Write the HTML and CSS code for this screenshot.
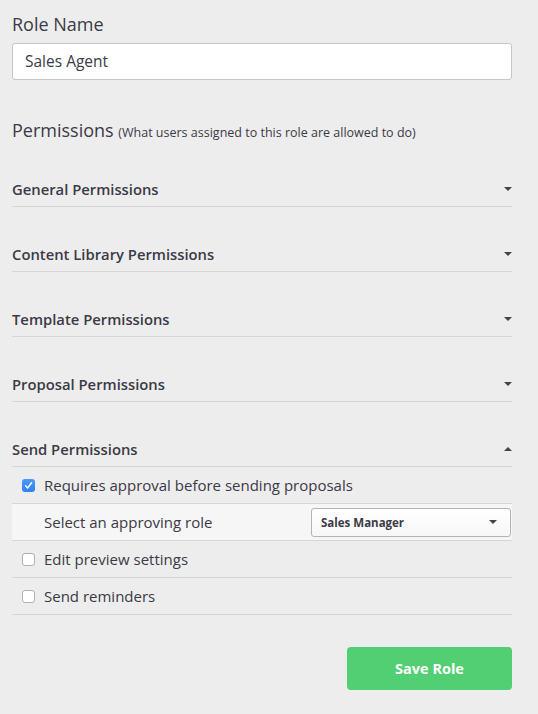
FILE: index.html
```html
<!DOCTYPE html>
<html>
<head>
<meta charset="utf-8">
<link rel="stylesheet" href="styles.css">
</head>
<body>
<div class="page">
  <div class="label">Role Name</div>
  <div class="input">Sales Agent</div>

  <div class="perm-title">Permissions <span class="sub">(What users assigned to this role are allowed to do)</span></div>

  <div class="section"><span>General Permissions</span><i class="caret down"></i></div>
  <div class="section"><span>Content Library Permissions</span><i class="caret down"></i></div>
  <div class="section"><span>Template Permissions</span><i class="caret down"></i></div>
  <div class="section"><span>Proposal Permissions</span><i class="caret down"></i></div>
  <div class="section"><span>Send Permissions</span><i class="caret up"></i></div>

  <div class="row"><span class="cb checked"><svg viewBox="0 0 13 13" width="13" height="13"><path d="M3.6 6.8 L5.6 9 L9.6 3.8" fill="none" stroke="#fff" stroke-width="1.4" stroke-linecap="round" stroke-linejoin="round"/></svg></span><span>Requires approval before sending proposals</span></div>
  <div class="row sub-row"><span class="sub-label">Select an approving role</span><div class="select"><span>Sales Manager</span><i class="caret down small"></i></div></div>
  <div class="row"><span class="cb"></span><span>Edit preview settings</span></div>
  <div class="row"><span class="cb"></span><span>Send reminders</span></div>

  <div class="actions"><button class="save">Save Role</button></div>
</div>
</body>
</html>
```
FILE: styles.css
```css
html, body { margin: 0; padding: 0; background: #ededed; }
body { font-family: "Open Sans", Lato, sans-serif; color: #3b3a46; }
.page { width: 500px; padding: 12px 0 0 12px; }
.label { font-size: 18px; line-height: 24px; height: 24px; margin-bottom: 7px; }
.input { box-sizing: border-box; height: 37px; background: #fff; border: 1px solid #c6c6c6; border-radius: 3px; padding: 0 12px; font-size: 15.5px; line-height: 35px; }
.perm-title { margin-top: 38px; font-size: 18px; line-height: 24px; height: 24px; }
.perm-title .sub { font-size: 12.5px; }
.section { margin-top: 30px; height: 35px; box-sizing: border-box; border-bottom: 1px solid #d6d6d6; display: flex; align-items: center; justify-content: space-between; font-weight: 600; font-size: 14.8px; }
.caret { display: block; width: 0; height: 0; border-left: 4.5px solid transparent; border-right: 4.5px solid transparent; }
.caret.down { border-top: 4px solid #444; }
.caret.up { border-bottom: 4px solid #444; }
.caret.small { border-left-width: 4px; border-right-width: 4px; border-top-width: 4px; }
.row { height: 37px; box-sizing: border-box; border-bottom: 1px solid #d6d6d6; display: flex; align-items: center; padding-left: 10px; font-size: 15px; }
.sub-row { background: #f6f6f6; padding-left: 32px; justify-content: space-between; padding-right: 1px; }
.cb { box-sizing: border-box; width: 13px; height: 13px; border-radius: 3px; border: 1px solid #b0b0b0; background: #fff; margin-right: 9px; display: flex; }
.cb.checked { border: none; background: linear-gradient(#4b9bf8, #2f7ff0); }
.select { box-sizing: border-box; width: 200px; height: 29px; border: 1px solid #b4b4b4; border-radius: 3px; background: linear-gradient(#ffffff, #f7f7f7); display: flex; align-items: center; justify-content: space-between; padding: 0 13px 0 9px; font-size: 11.5px; font-weight: 700; }
.actions { display: flex; justify-content: flex-end; margin-top: 32px; }
.save { width: 165px; height: 43px; border: none; border-radius: 4px; background: #53cf73; color: #fff; font-family: inherit; font-size: 14.5px; font-weight: 700; }
```
